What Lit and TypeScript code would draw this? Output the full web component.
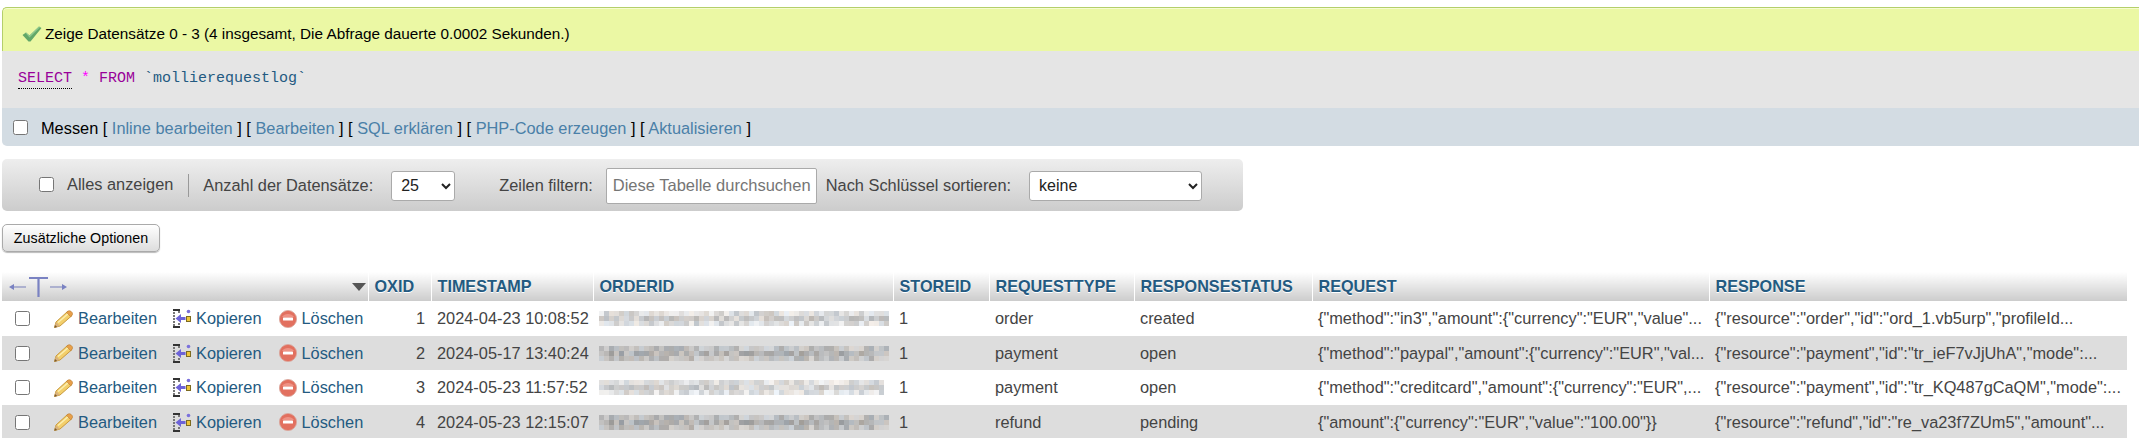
import { LitElement, html, css, svg } from "lit";
import { customElement } from "lit/decorators.js";

interface Row { id: number; ts: string; type: string; status: string; req: string; res: string; seed: number; w: number; base: number; }

const rows: Row[] = [
  { id: 1, ts: "2024-04-23 10:08:52", type: "order", status: "created", req: '{"method":"in3","amount":{"currency":"EUR","value"...', res: '{"resource":"order","id":"ord_1.vb5urp","profileId...', seed: 11, w: 58, base: 214 },
  { id: 2, ts: "2024-05-17 13:40:24", type: "payment", status: "open", req: '{"method":"paypal","amount":{"currency":"EUR","val...', res: '{"resource":"payment","id":"tr_ieF7vJjUhA","mode":...', seed: 29, w: 58, base: 188 },
  { id: 3, ts: "2024-05-23 11:57:52", type: "payment", status: "open", req: '{"method":"creditcard","amount":{"currency":"EUR",...', res: '{"resource":"payment","id":"tr_KQ487gCaQM","mode":...', seed: 47, w: 57, base: 218 },
  { id: 4, ts: "2024-05-23 12:15:07", type: "refund", status: "pending", req: '{"amount":{"currency":"EUR","value":"100.00"}}', res: '{"resource":"refund","id":"re_va23f7ZUm5","amount"...', seed: 29, w: 58, base: 186 },
];

function mosaic(r: Row) {
  let s = r.seed * 7919;
  const rnd = () => { s = (s * 1664525 + 1013904223) >>> 0; return s / 4294967296; };
  const cells = [];
  for (let row = 0; row < 3; row++) {
    for (let c = 0; c < r.w; c++) {
      const band = row === 1 ? -10 : 6;
      const v = r.base + band + (rnd() - 0.5) * 44;
      const t = (rnd() - 0.5) * 12;
      const fill = `rgb(${Math.round(v + t)},${Math.round(v)},${Math.round(v - t)})`;
      cells.push(svg`<rect x=${c * 5} y=${row * 5} width="5" height="5" fill=${fill}></rect>`);
    }
  }
  return html`<svg class="mosaic" width="290" height="15" viewBox="0 0 290 15" shape-rendering="crispEdges">${cells}</svg>`;
}

const pencil = html`<svg class="ic" width="19" height="18" viewBox="0 0 19 18">
  <path d="M0.5 17.5 L2 12 L13.5 1.5 L18 5.5 L6 16 Z" fill="#f3cf6b" stroke="#c99a3e" stroke-width="1"/>
  <path d="M4 12.5 L15 3" stroke="#fbeeb0" stroke-width="1.6" fill="none"/>
  <path d="M12.5 2.3 L14 1 Q15.5 0.2 17 1.3 L18.3 2.8 Q19 4.2 18 5.5 L16.6 6.7 Z" fill="#e8a04a" stroke="#b87a30" stroke-width=".6"/>
  <path d="M0.5 17.5 L2 12 L6 16 Z" fill="#d9b27c"/>
  <path d="M0.3 17.7 L1 15 L3.2 17 Z" fill="#7a5a30"/>
</svg>`;

const copy = html`<svg class="ic" width="18" height="19" viewBox="0 0 18 19" shape-rendering="crispEdges">
  <path d="M0 0h7v1.5H0zM0 17h7v1.5H0z" fill="#333"/>
  <path d="M0 3h2v2H0zM0 6h2v2H0zM0 9h2v2H0zM0 12h2v2H0zM0 15h2v2H0zM5 2h2v2H5zM5 14h2v2H5z" fill="#777"/>
  <path d="M2.5 9.5 L8 5 V8 H12.5 V11 H8 V14 Z" fill="#6d63d8" shape-rendering="auto"/>
  <rect x="13.5" y="7.5" width="4" height="5" fill="#eec53a" stroke="#7d6a20" stroke-width="1"/>
  <circle cx="15.5" cy="2.5" r="1.8" fill="#7a70dc" shape-rendering="auto"/>
</svg>`;

const del = html`<svg class="ic" width="18" height="18" viewBox="0 0 18 18">
  <circle cx="9" cy="9" r="8.6" fill="#e2705f" stroke="#d9a69c" stroke-width=".8"/>
  <path d="M3 7 A7 6 0 0 1 15 7 Z" fill="#ee9285"/>
  <rect x="4" y="7.4" width="10" height="3.2" rx=".6" fill="#fff"/>
</svg>`;

const check = html`<svg class="tick" width="20" height="16" viewBox="0 0 20 16">
  <path d="M0.5 9 L4 6.5 L7.5 9.5 L17 0.5 L19.5 2 L8.5 15.5 L6.5 15.5 Z" fill="#62a868"/>
  <path d="M4 6.5 L7.5 9.5 L17 0.5 L18 1.2 L7.5 11.5 L3.5 7 Z" fill="#8fca8e"/>
</svg>`;

const columns = [366, 63, 162, 300, 96, 145, 178, 397, 418];

@customElement("app-root")
export class AppRoot extends LitElement {
  static styles = css`
    :host { display: block; height: 438px; overflow: hidden; font-family: "Liberation Sans", Arial, sans-serif; font-size: 16.35px; color: #444; box-sizing: border-box; padding: 7px 0 0 2px; }
    * { box-sizing: border-box; }
    a { color: #235a81; text-decoration: none; }
    .success { height: 44px; display: flex; align-items: center; padding: 8px 0 0 19px; gap: 3px; font-size: 15.3px; color: #000; background: #ebf8a4; border: 1px solid #b4cf6a; border-right: 0; border-bottom: 0; border-radius: 5px 0 0 0; box-shadow: inset 0 1px 0 #f6fcd0; }
    .tick { flex: none; }
    .sql { height: 57px; padding: 19px 0 0 16px; background: #e5e5e5; font-family: "Liberation Mono", monospace; font-size: 15px; white-space: pre; color: #235a81; }
    .kw { color: #990099; }
    .kw.first { border-bottom: 1px dotted #000; padding-bottom: 1px; }
    .star { color: #ff00ff; }
    .tools { height: 38px; display: flex; align-items: center; padding: 2px 0 0 11px; background: #d3dce3; color: #000; border-radius: 0 0 0 5px; }
    .tools a { color: #4a80a8; }
    input[type="checkbox"] { width: 15px; height: 15px; margin: 0; flex: none; }
    .tools input[type="checkbox"] { margin: -2px 13px 0 0; }
    .nav { width: 1241px; height: 52px; margin-top: 13px; display: flex; align-items: center; padding: 1px 0 0 37px; border-radius: 5px; background: linear-gradient(#eeeeee, #cccccc); }
    .nav .all { margin-left: 13px; margin-top: -3px; }
    .nav input[type="checkbox"] { margin-top: -2px; }
    .sep { width: 1px; height: 23px; background: #999; margin: 0 14px 0 15px; }
    select { height: 30px; background: #fff; border: 1px solid #aaa; border-radius: 3px; font: 16px "Liberation Sans", Arial, sans-serif; color: #222; padding-left: 5px; }
    .s1 { width: 64px; margin: 0 0 0 18px; }
    .s2 { width: 173px; margin-left: 18px; padding-left: 5px; }
    .lbl2 { margin-left: 44px; }
    .lbl3 { margin-left: 9px; }
    .filter { width: 211px; height: 36px; margin-left: 13px; padding: 0 0 0 6px; border: 1px solid #aaa; border-radius: 2px; font: 16.5px "Liberation Sans", Arial, sans-serif; background: #fff; color: #444; }
    .filter::placeholder { color: #757575; opacity: 1; }
    .more { display: block; width: 158px; height: 28px; margin-top: 13px; padding: 0; font: 14.3px "Liberation Sans", Arial, sans-serif; color: #000; background: linear-gradient(#ffffff, #dddddd); border: 1px solid #aaa; border-radius: 5px; box-shadow: 0 1px 1px #bbb; white-space: nowrap; }
    table { margin-top: 20px; border-collapse: collapse; table-layout: fixed; width: 2125px; }
    th { height: 29px; padding: 0 0 0 6px; text-align: left; font-weight: bold; font-size: 16.2px; color: #235a81; white-space: nowrap; background: linear-gradient(#ffffff, #cccccc); border-left: 1px solid #fff; text-shadow: 0 1px 0 #fff; }
    th:first-child { border-left: 0; padding: 0; }
    .head { display: flex; align-items: center; justify-content: space-between; padding: 0 2px 0 7px; }
    td { padding: 0 0 0 6px; white-space: nowrap; overflow: hidden; }
    td:first-child { padding: 0; }
    tbody tr:nth-child(odd) td { height: 35px; background: #fff; }
    tbody tr:nth-child(even) td { height: 34px; background: #ddd; }
    td.num { text-align: right; padding: 0 6px 0 0; }
    .actions { display: flex; align-items: center; padding-left: 13px; }
    .act { display: flex; align-items: center; gap: 5px; }
    .act1 { margin-left: 24px; }
    .act2 { margin-left: 16px; }
    .act3 { margin-left: 17px; }
    .ic { flex: none; }
    .mosaic { display: block; }
  `;

  render() {
    return html`
      <div class="success">${check}<span>Zeige Datensätze 0 - 3 (4 insgesamt, Die Abfrage dauerte 0.0002 Sekunden.)</span></div>
      <div class="sql"><span class="kw first">SELECT</span> <span class="star">*</span> <span class="kw">FROM</span> <span>\`mollierequestlog\`</span></div>
      <div class="tools">
        <input type="checkbox" /><span>Messen [ <a href="#">Inline bearbeiten</a> ] [ <a href="#">Bearbeiten</a> ] [ <a href="#">SQL erklären</a> ] [ <a href="#">PHP-Code erzeugen</a> ] [ <a href="#">Aktualisieren</a> ]</span>
      </div>
      <div class="nav">
        <input type="checkbox" /><span class="all">Alles anzeigen</span><span class="sep"></span>
        <span>Anzahl der Datensätze:</span>
        <select class="s1"><option>25</option></select>
        <span class="lbl2">Zeilen filtern:</span>
        <input class="filter" placeholder="Diese Tabelle durchsuchen" />
        <span class="lbl3">Nach Schlüssel sortieren:</span>
        <select class="s2"><option>keine</option></select>
      </div>
      <button class="more">Zusätzliche Optionen</button>
      <table>
        <colgroup>${columns.map((w) => html`<col style="width:${w}px" />`)}</colgroup>
        <thead>
          <tr>
            <th>
              <div class="head">
                <svg width="58" height="22" viewBox="0 0 58 22">
                  <path d="M2 11H17M41 11H56" stroke="#9aa0c8" stroke-width="1.4"/>
                  <path d="M0 11L5 8V14ZM58 11L53 8V14Z" fill="#7a82c2"/>
                  <path d="M20 2H39M29.5 2V21" stroke="#7a82c2" stroke-width="2.2" fill="none"/>
                </svg>
                <svg width="14" height="8" viewBox="0 0 14 8"><path d="M0 0H14L7 8Z" fill="#555"/></svg>
              </div>
            </th>
            ${["OXID", "TIMESTAMP", "ORDERID", "STOREID", "REQUESTTYPE", "RESPONSESTATUS", "REQUEST", "RESPONSE"].map((h) => html`<th>${h}</th>`)}
          </tr>
        </thead>
        <tbody>
          ${rows.map((r) => html`
            <tr>
              <td>
                <div class="actions">
                  <input type="checkbox" />
                  <a class="act act1" href="#">${pencil}Bearbeiten</a>
                  <a class="act act2" href="#">${copy}Kopieren</a>
                  <a class="act act3" href="#">${del}Löschen</a>
                </div>
              </td>
              <td class="num">${r.id}</td>
              <td>${r.ts}</td>
              <td>${mosaic(r)}</td>
              <td>1</td>
              <td>${r.type}</td>
              <td>${r.status}</td>
              <td>${r.req}</td>
              <td>${r.res}</td>
            </tr>`)}
        </tbody>
      </table>
    `;
  }
}
